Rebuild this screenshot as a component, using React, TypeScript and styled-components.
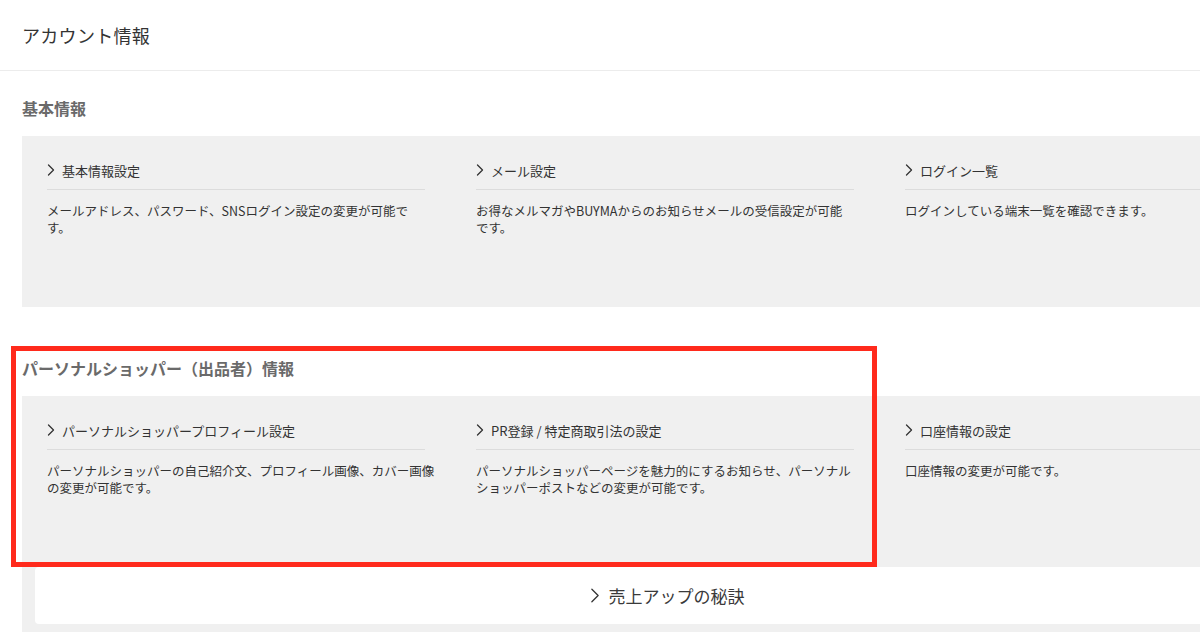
import React from "react";
import styled, { createGlobalStyle } from "styled-components";

const GlobalStyle = createGlobalStyle`
  html, body {
    margin: 0;
    padding: 0;
    overflow: hidden;
    background: #ffffff;
  }
  body {
    font-family: "Noto Sans CJK JP", "Noto Sans", sans-serif;
    color: #333333;
  }
  * { box-sizing: border-box; }
`;

const Page = styled.div`
  width: 100%;
  overflow: hidden;
`;

const Header = styled.header`
  height: 71px;
  display: flex;
  align-items: center;
  padding: 0 0 1px 22px;
  border-bottom: 1px solid #ececec;
`;

const PageTitle = styled.h1`
  margin: 0;
  font-size: 18px;
  font-weight: 400;
  color: #333333;
  letter-spacing: 0.3px;
`;

const Main = styled.main`
  width: 1332px;
  padding: 0 22px;
`;

const Section = styled.section<{ $top: number }>`
  position: relative;
  margin-top: ${(p) => p.$top}px;
`;

const SectionTitle = styled.h2`
  margin: 0 0 16px;
  height: 24px;
  line-height: 24px;
  font-size: 16px;
  font-weight: 700;
  color: #6a6a6a;
`;

const Panel = styled.div`
  width: 1288px;
  background: #f0f0f0;
`;

const CardGrid = styled.div`
  display: grid;
  grid-template-columns: repeat(3, 378px);
  column-gap: 51px;
  height: 171px;
  padding: 0 25px;
`;

const Card = styled.div`
  padding-top: 24px;
`;

const CardHead = styled.div`
  display: flex;
  align-items: center;
  gap: 7px;
  height: 20px;
  padding-bottom: 9px;
  box-sizing: content-box;
  border-bottom: 1px solid #dcdcdc;
  font-size: 13px;
  color: #333333;
`;

const CardText = styled.p`
  margin: 12px 0 0;
  font-size: 12.5px;
  line-height: 17px;
  color: #333333;
  white-space: nowrap;
`;

const Footer = styled.div`
  padding: 0 13px 13px;
`;

const SecretLink = styled.a`
  display: flex;
  align-items: center;
  justify-content: center;
  gap: 9px;
  height: 57px;
  background: #ffffff;
  border-radius: 4px;
  font-size: 17px;
  color: #3a3a3a;
  text-decoration: none;
  padding-left: 2px;
`;

const Highlight = styled.div`
  position: absolute;
  left: -11px;
  top: -10px;
  width: 866px;
  height: 221px;
  border: 5px solid #ff2a1c;
  pointer-events: none;
`;

const Chevron = ({ size = 1 }: { size?: number }) => (
  <svg
    width={8 * size}
    height={12 * size}
    viewBox="0 0 8 12"
    fill="none"
    stroke="#333"
    strokeWidth={1.3 / size}
    strokeLinecap="round"
    strokeLinejoin="round"
  >
    <polyline points="1.5,1 6.5,6 1.5,11" />
  </svg>
);

type Item = { title: string; lines: string[] };

const basic: Item[] = [
  {
    title: "基本情報設定",
    lines: ["メールアドレス、パスワード、SNSログイン設定の変更が可能で", "す。"],
  },
  {
    title: "メール設定",
    lines: ["お得なメルマガやBUYMAからのお知らせメールの受信設定が可能", "です。"],
  },
  {
    title: "ログイン一覧",
    lines: ["ログインしている端末一覧を確認できます。"],
  },
];

const shopper: Item[] = [
  {
    title: "パーソナルショッパープロフィール設定",
    lines: ["パーソナルショッパーの自己紹介文、プロフィール画像、カバー画像", "の変更が可能です。"],
  },
  {
    title: "PR登録 / 特定商取引法の設定",
    lines: ["パーソナルショッパーページを魅力的にするお知らせ、パーソナル", "ショッパーポストなどの変更が可能です。"],
  },
  {
    title: "口座情報の設定",
    lines: ["口座情報の変更が可能です。"],
  },
];

const Cards = ({ items }: { items: Item[] }) => (
  <CardGrid>
    {items.map((it) => (
      <Card key={it.title}>
        <CardHead>
          <Chevron />
          <span>{it.title}</span>
        </CardHead>
        <CardText>
          {it.lines.map((l, i) => (
            <React.Fragment key={i}>
              {i > 0 && <br />}
              {l}
            </React.Fragment>
          ))}
        </CardText>
      </Card>
    ))}
  </CardGrid>
);

export default function App() {
  return (
    <>
      <GlobalStyle />
      <Page>
        <Header>
          <PageTitle>アカウント情報</PageTitle>
        </Header>
        <Main>
          <Section $top={25}>
            <SectionTitle>基本情報</SectionTitle>
            <Panel>
              <Cards items={basic} />
            </Panel>
          </Section>
          <Section $top={49}>
            <SectionTitle>パーソナルショッパー（出品者）情報</SectionTitle>
            <Panel>
              <Cards items={shopper} />
              <Footer>
                <SecretLink href="#">
                  <Chevron size={1.25} />
                  <span>売上アップの秘訣</span>
                </SecretLink>
              </Footer>
            </Panel>
            <Highlight />
          </Section>
        </Main>
      </Page>
    </>
  );
}
